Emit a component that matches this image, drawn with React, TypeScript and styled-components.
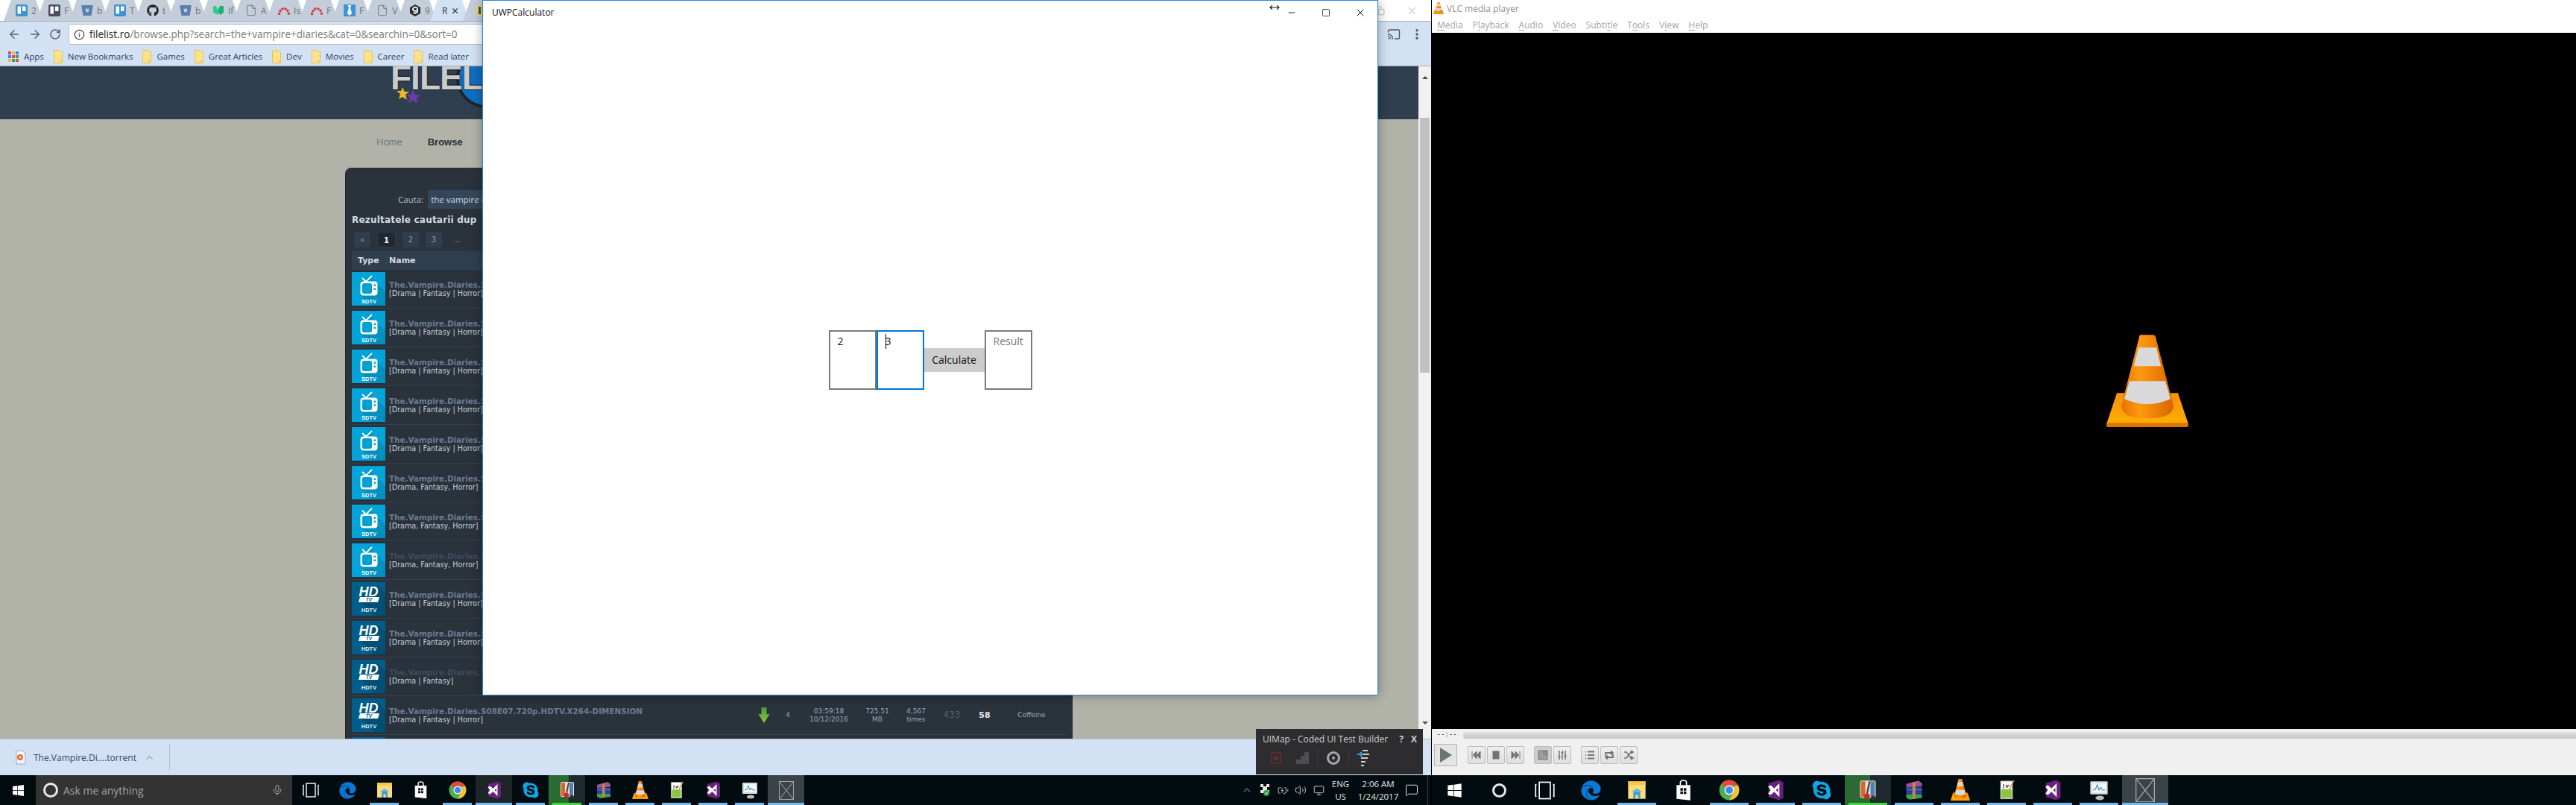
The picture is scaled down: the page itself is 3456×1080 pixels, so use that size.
import React from 'react'
import styled, { createGlobalStyle } from 'styled-components'
import { ArrowLeft, ArrowRight, RotateCw, Info, File, X, ChevronUp, Minus, Square, MoveHorizontal, Cast, EllipsisVertical, Copy, Mic, Volume2, MessageSquare, Monitor, BatteryCharging } from 'lucide-react'
import { FaGithub, FaBitbucket, FaEdge, FaSkype, FaWindows } from 'react-icons/fa'

const UI_FONT = `"Open Sans", "Noto Sans", "Liberation Sans", sans-serif`
const WEB_FONT = `"DejaVu Sans", "Liberation Sans", sans-serif`

const GlobalStyle = createGlobalStyle`
  html, body { margin: 0; padding: 0; width: 3456px; height: 1080px; overflow: hidden; background: #000; }
  * { box-sizing: border-box; }
`

const Desktop = styled.div`
  position: relative;
  display: flex;
  width: 3456px;
  height: 1080px;
  overflow: hidden;
  font-family: ${UI_FONT};
`

/* ---------- left monitor, browser ---------- */

const LeftScreen = styled.div`
  width: 1920px;
  height: 1080px;
  display: flex;
  flex-direction: column;
  flex: none;
`

const TabStrip = styled.div`
  height: 29px;
  flex: none;
  display: flex;
  align-items: flex-start;
  padding-left: 5px;
  background: #fff;
  border-bottom: 1px solid #a9adb3;
`

const Tab = styled.div<{ $active?: boolean }>`
  width: 53px;
  height: 28px;
  flex: none;
  margin-right: -9px;
  padding-left: 16px;
  display: flex;
  align-items: center;
  gap: 5px;
  overflow: hidden;
  font-size: 12px;
  color: ${({ $active }) => ($active ? '#333' : '#6f7377')};
  background: ${({ $active }) => ($active ? '#d3e1f5' : '#c4cdda')};
  clip-path: polygon(0 100%, 10px 0, calc(100% - 10px) 0, 100% 100%);
  svg { flex: none; }
`

const WindowButtons = styled.div`
  margin-left: auto;
  height: 28px;
  display: flex;
  align-items: center;
  gap: 28px;
  padding-right: 17px;
  color: #8a8a8a;
`

const Toolbar = styled.div`
  height: 34px;
  flex: none;
  display: flex;
  align-items: center;
  background: #d3e1f5;
  padding: 0 10px;
  color: #5f6368;
`

const NavIcons = styled.div`
  display: flex;
  align-items: center;
  gap: 10px;
  width: 82px;
`

const Omnibox = styled.div`
  width: 1750px;
  height: 28px;
  display: flex;
  align-items: center;
  gap: 6px;
  padding-left: 6px;
  flex: none;
  background: #fff;
  border: 1px solid #b7bcc4;
  border-radius: 2px;
  font-size: 13.55px;
  color: #7a7a7a;
  white-space: nowrap;
  b { font-weight: 400; color: #222; }
`

const ToolbarEnd = styled.div`
  margin-left: auto;
  display: flex;
  align-items: center;
  gap: 13px;
  color: #555;
`

const Bookmarks = styled.div`
  height: 26px;
  flex: none;
  display: flex;
  align-items: center;
  gap: 13px;
  padding-left: 11px;
  background: #d3e1f5;
  border-bottom: 1px solid #a9adb3;
  font-size: 11.5px;
  color: #2f4061;
`

const Bookmark = styled.span`
  display: flex;
  align-items: center;
  gap: 7px;
  white-space: nowrap;
`

const Viewport = styled.div`
  flex: 1;
  min-height: 0;
  display: flex;
  overflow: hidden;
`

const WebPage = styled.div`
  flex: 1;
  min-width: 0;
  background: #b1b2a8;
  font-family: ${WEB_FONT};
`

const SiteHeader = styled.div`
  position: relative;
  height: 71px;
  overflow: hidden;
  background: #2f3f50;
`

const LogoDisc = styled.div`
  position: absolute;
  left: 612px;
  top: -24px;
  width: 80px;
  height: 80px;
  border-radius: 50%;
  background: #0f6fbe;
  border: 4px solid #1a2530;
`

const LogoText = styled.div`
  position: absolute;
  left: 524px;
  top: -12px;
  font: 700 46px "Liberation Sans", sans-serif;
  letter-spacing: -1px;
  color: #c9ccce;
  text-shadow: 0 1px 0 #111, 1px 0 0 #222, 0 -1px 0 #111;
`

const LogoStars = styled.svg`
  position: absolute;
  left: 532px;
  top: 24px;
`

const SiteNav = styled.div`
  height: 65px;
  padding: 9px 0 0 505px;
  display: flex;
  gap: 34px;
  font: 13px "Liberation Sans", sans-serif;
  line-height: 43px;
`

const NavLink = styled.span<{ $current?: boolean }>`
  color: ${({ $current }) => ($current ? '#27303c' : '#697889')};
  font-weight: ${({ $current }) => ($current ? 700 : 400)};
`

const Panel = styled.div`
  width: 976px;
  margin-left: 463px;
  padding: 29px 8px 0;
  min-height: 800px;
  background: #2a323c;
  border: 1px solid #1f2630;
  border-radius: 8px;
`

const SearchRow = styled.div`
  height: 25px;
  padding-left: 62px;
  display: flex;
  align-items: center;
  gap: 6px;
  font-family: ${UI_FONT};
  font-size: 11.5px;
  color: #b9c2cc;
`

const SearchInput = styled.div`
  width: 640px;
  height: 25px;
  padding-left: 4px;
  line-height: 25px;
  background: #34465a;
  border-radius: 2px;
  color: #d5dce3;
`

const ResultsTitle = styled.div`
  height: 31px;
  line-height: 31px;
  font-weight: 700;
  font-size: 12px;
  letter-spacing: 0.2px;
  color: #d5dae0;
  white-space: nowrap;
`

const Pager = styled.div`
  height: 21px;
  display: flex;
  align-items: center;
  gap: 9px;
  padding-left: 3px;
  font-size: 10px;
`

const PageButton = styled.span<{ $current?: boolean }>`
  width: ${({ $current }) => ($current ? 25 : 22)}px;
  height: 21px;
  line-height: 21px;
  text-align: center;
  border-radius: 3px;
  background: ${({ $current }) => ($current ? '#1f2935' : '#303d4d')};
  border: ${({ $current }) => ($current ? '1px solid #2f3d4e' : 'none')};
  color: ${({ $current }) => ($current ? '#eef1f4' : '#8f9cad')};
  font-weight: ${({ $current }) => ($current ? 700 : 400)};
`

const PageGap = styled.span`
  width: 22px;
  text-align: center;
  color: #8f9cad;
`

const TableHead = styled.div`
  height: 25px;
  margin-top: 5px;
  display: grid;
  grid-template-columns: 42px 1fr;
  padding-left: 8px;
  align-items: center;
  background: #2f3f50;
  font-size: 11px;
  font-weight: 700;
  color: #d5dae0;
`

const Row = styled.div`
  height: 52px;
  padding: 3px 9px 3px 0;
  display: grid;
  grid-template-columns: 50px 1fr 40px 24px 86px 44px 60px 36px 52px 74px;
  align-items: center;
  border-bottom: 1px solid #35404e;
  font-size: 9px;
  line-height: 11px;
  color: #9aa7b6;
`

const NameCell = styled.div`
  min-width: 0;
  white-space: nowrap;
`

const TorrentName = styled.div<{ $dim?: boolean }>`
  font-size: 10.4px;
  font-weight: 700;
  line-height: 12px;
  color: ${({ $dim }) => ($dim ? '#3f4b5c' : '#6c7b91')};
`

const Genres = styled.div`
  font-size: 9.6px;
  line-height: 12px;
  color: #c6ced7;
`

const NumberCell = styled.div<{ $tone?: 'muted' | 'strong' }>`
  text-align: center;
  font-size: ${({ $tone }) => ($tone === 'muted' ? 12 : $tone === 'strong' ? 11 : 9)}px;
  font-weight: ${({ $tone }) => ($tone === 'strong' ? 700 : 400)};
  color: ${({ $tone }) => ($tone === 'muted' ? '#56616e' : $tone === 'strong' ? '#e6e9ec' : '#9aa7b6')};
`

const ArrowCell = styled.div`
  display: flex;
  justify-content: center;
`

const NextTile = styled.div`
  width: 45px;
  height: 45px;
  margin-top: 3px;
  background: #005e8b;
`

const PageScrollbar = styled.div`
  width: 17px;
  flex: none;
  display: flex;
  flex-direction: column;
  align-items: center;
  background: #f1f1f1;
`

const ScrollArrow = styled.div<{ $down?: boolean }>`
  height: 17px;
  flex: none;
  width: 0;
  border-left: 4px solid transparent;
  border-right: 4px solid transparent;
  ${({ $down }) => ($down ? 'border-top: 4px solid #505050; margin-top: auto;' : 'border-bottom: 4px solid #505050;')}
  margin-bottom: 6px;
`

const ScrollThumb = styled.div`
  width: 13px;
  height: 342px;
  margin-top: 46px;
  background: #c1c1c1;
`

const DownloadBar = styled.div`
  height: 49px;
  flex: none;
  display: flex;
  align-items: center;
  padding-left: 21px;
  gap: 10px;
  background: #d3e1f5;
  border-top: 1px solid #b9bfc7;
  font-size: 12px;
  color: #35466a;
`

const DownloadDivider = styled.div`
  width: 1px;
  height: 36px;
  margin-left: 9px;
  background: #b0bccb;
`

/* ---------- taskbars ---------- */

const Taskbar = styled.div`
  height: 40px;
  flex: none;
  display: flex;
  background: #020b0f;
  color: #fff;
`

const TaskCell = styled.div<{ $w: number; $on?: boolean; $fill?: string; $line?: string; $wide?: boolean }>`
  position: relative;
  width: ${({ $w }) => $w}px;
  flex: none;
  display: flex;
  align-items: center;
  justify-content: center;
  background: ${({ $fill }) => $fill || 'transparent'};
  &::after {
    content: '';
    display: ${({ $on }) => ($on ? 'block' : 'none')};
    position: absolute;
    bottom: 0;
    height: 3px;
    left: ${({ $wide }) => ($wide ? 0 : 5)}px;
    right: ${({ $wide }) => ($wide ? 0 : 5)}px;
    background: ${({ $line }) => $line || '#76b9ed'};
  }
`

const SearchBox = styled.div`
  width: 344px;
  flex: none;
  display: flex;
  align-items: center;
  padding: 0 12px 0 10px;
  gap: 7px;
  background: #333;
  font-size: 14px;
  color: #a3a3a3;
  svg:last-child { margin-left: auto; }
`

const CortanaRing = styled.div<{ $size: number }>`
  width: ${({ $size }) => $size}px;
  height: ${({ $size }) => $size}px;
  border: 3px solid #e8e8e8;
  border-radius: 50%;
`

const Tray = styled.div`
  margin-left: auto;
  display: flex;
  align-items: stretch;
`

const TrayIcon = styled.div`
  width: 24px;
  display: flex;
  align-items: center;
  justify-content: center;
  color: #e6e6e6;
`

const TrayText = styled.div<{ $w: number }>`
  width: ${({ $w }) => $w}px;
  display: flex;
  flex-direction: column;
  align-items: center;
  justify-content: center;
  gap: 2px;
  font-size: 11.5px;
  line-height: 15px;
  color: #e6e6e6;
`

const ShowDesktop = styled.div`
  width: 14px;
  background: linear-gradient(to right, transparent 9px, #3a4347 9px, #3a4347 10px, transparent 10px);
`

/* ---------- right monitor, VLC ---------- */

const RightScreen = styled.div`
  flex: 1;
  min-width: 0;
  display: flex;
  flex-direction: column;
  overflow: hidden;
  background: #000;
  border-left: 1px solid #000;
`

const VlcWindow = styled.div`
  flex: 1;
  min-height: 0;
  width: 1919px;
  display: flex;
  flex-direction: column;
  background: #f0f0f0;
`

const VlcTitle = styled.div`
  height: 22px;
  flex: none;
  display: flex;
  align-items: center;
  gap: 4px;
  padding-left: 2px;
  background: #fff;
  font-size: 12px;
  color: #8f8f8f;
`

const VlcMenu = styled.div`
  height: 22px;
  flex: none;
  display: flex;
  align-items: center;
  gap: 13px;
  padding-left: 7px;
  background: #fff;
  font-size: 12px;
  color: #a3a3a3;
  u { text-underline-offset: 2px; }
`

const VideoArea = styled.div`
  flex: 1;
  min-height: 0;
  display: flex;
  align-items: center;
  justify-content: center;
  background: #000;
`

const SeekRow = styled.div`
  height: 13px;
  flex: none;
  display: flex;
  align-items: flex-end;
  padding-left: 5px;
  gap: 7px;
  font: 9px "Liberation Mono", monospace;
  color: #222;
`

const SeekTime = styled.span`
  width: 30px;
  text-align: center;
  line-height: 9px;
`

const SeekBar = styled.div`
  flex: 1;
  height: 9px;
  border-radius: 3px;
  background: linear-gradient(#e2e2e2, #c6c6c6);
`

const Controls = styled.div`
  height: 49px;
  flex: none;
  display: flex;
  align-items: flex-start;
  padding: 7px 0 0 3px;
`

const PlayButton = styled.div`
  width: 31px;
  height: 30px;
  display: flex;
  align-items: center;
  justify-content: center;
  margin-right: 14px;
  background: #e4e4e4;
  border: 1px solid #b5b5b5;
`

const ControlGroup = styled.div`
  display: flex;
  gap: 2px;
  margin-right: 13px;
  margin-top: 3px;
`

const ControlButton = styled.div<{ $pressed?: boolean }>`
  width: 24px;
  height: 24px;
  display: flex;
  align-items: center;
  justify-content: center;
  background: ${({ $pressed }) => ($pressed ? '#cfcfcf' : 'linear-gradient(#efefef, #dedede)')};
  border: 1px solid #bcbcbc;
  border-radius: 2px;
`

/* ---------- floating windows ---------- */

const UwpWindow = styled.div`
  position: absolute;
  left: 647px;
  top: 0;
  width: 1202px;
  height: 933px;
  display: flex;
  flex-direction: column;
  background: #fff;
  border: 1px solid #2b88d8;
  box-shadow: 0 0 14px rgba(0, 0, 0, 0.35);
`

const UwpTitleBar = styled.div`
  height: 32px;
  flex: none;
  display: flex;
  align-items: flex-start;
  padding: 8px 0 0 12px;
  font-size: 12px;
  line-height: 15px;
  color: #111;
`

const UwpControls = styled.div`
  margin-left: auto;
  display: flex;
  align-items: center;
  color: #111;
`

const ResizeCursor = styled.div`
  width: 18px;
  margin: -14px -9px 0 0;
  display: flex;
  justify-content: center;
`

const UwpButton = styled.div`
  width: 46px;
  display: flex;
  justify-content: center;
`

const UwpBody = styled.div`
  flex: 1;
  display: flex;
  align-items: center;
  justify-content: center;
`

const CalcBox = styled.div<{ $focused?: boolean; $placeholder?: boolean }>`
  width: 64px;
  height: 80px;
  padding: 3px 10px;
  border: 2px solid ${({ $focused }) => ($focused ? '#0078d7' : '#7a7a7a')};
  font-size: 14px;
  line-height: 20px;
  color: ${({ $placeholder }) => ($placeholder ? '#7a7a7a' : '#111')};
`

const Caret = styled.span`
  display: inline-block;
  width: 1px;
  height: 20px;
  margin-right: -1px;
  vertical-align: top;
  background: #000;
`

const CalcButton = styled.div`
  width: 81px;
  height: 32px;
  line-height: 32px;
  text-align: center;
  background: #ccc;
  font-size: 14px;
  color: #111;
`

const BuilderWindow = styled.div`
  position: absolute;
  left: 1685px;
  top: 978px;
  width: 224px;
  height: 61px;
  padding: 4px 8px 0 9px;
  background: #2d2d30;
  font-size: 12px;
  color: #d0d0d0;
`

const BuilderHead = styled.div`
  height: 18px;
  display: flex;
  align-items: center;
  white-space: nowrap;
  b { font-weight: 700; margin-left: 10px; }
  span:first-child { margin-right: auto; }
`

const BuilderTools = styled.div`
  height: 28px;
  margin-top: 3px;
  display: flex;
  align-items: center;
  padding-left: 11px;
`

const BuilderDivider = styled.div<{ $gap: number }>`
  width: 1px;
  height: 24px;
  margin: 0 ${({ $gap }) => $gap}px;
  background: #3f3f42;
`

const StepsIcon = styled.svg`
  margin-left: 19px;
`

/* ---------- drawings ---------- */

const Trello = ({ dark }: { dark?: boolean }) => (
  <svg width="16" height="16" viewBox="0 0 16 16">
    <rect width="16" height="16" rx="2" fill={dark ? '#4d4d5c' : '#3c94d4'} />
    <rect x="2.5" y="2.5" width="4.5" height="10" rx="0.6" fill="#fff" />
    <rect x="9" y="2.5" width="4.5" height="6.5" rx="0.6" fill="#fff" />
  </svg>
)

const RedisArc = () => (
  <svg width="16" height="16" viewBox="0 0 16 16" fill="none">
    <path d="M1.5 14 A6.5 8.5 0 0 1 14.5 14" stroke="#d6363f" strokeWidth="3" strokeDasharray="3 1" />
  </svg>
)

const MediumMark = () => (
  <svg width="16" height="16" viewBox="0 0 16 16">
    <path d="M1 2 L5 2 L8 9 V14 L1 11Z" fill="#2bcf8e" />
    <path d="M15 2 L10 2 L7 8 L10 14 L15 11Z" fill="#1faf78" />
  </svg>
)

const TieMark = () => (
  <svg width="16" height="16" viewBox="0 0 16 16">
    <rect width="16" height="16" fill="#3e95d2" />
    <path d="M5.5 1 H10.5 L9 4 L11 12 L8 15 L5 12 L7 4Z" fill="#fff" />
  </svg>
)

const NineMark = () => (
  <svg width="16" height="16" viewBox="0 0 16 16">
    <path d="M8 0 L15 4 V12 L8 16 L1 12 V4Z" fill="#2b2b2b" />
    <path d="M5 5 L8 3.5 L11 5 V10 L8 12 L5.5 10.5 M5 5 V7.5 L8 9 L11 7.5" fill="none" stroke="#fff" strokeWidth="1.8" />
  </svg>
)

const HalfLogo = () => (
  <svg width="16" height="16" viewBox="0 0 16 16">
    <circle cx="8" cy="8" r="7" fill="#f5e02a" />
    <rect x="5" y="3" width="3" height="10" fill="#2147c8" />
  </svg>
)

const Folder = () => (
  <svg width="12" height="18" viewBox="0 0 12 18">
    <path d="M0.5 0.5 H7 L8 2 H11.5 V17.5 H0.5Z" fill="#fde28c" stroke="#e3c25a" />
    <rect x="8" y="14" width="3.5" height="3.5" fill="#f4cf5c" />
  </svg>
)

const AppsGrid = () => (
  <svg width="14" height="14" viewBox="0 0 14 14">
    {['#e8453c', '#f7bb2a', '#3c83f0', '#3c83f0', '#e8453c', '#34a853', '#f7bb2a', '#34a853', '#e8453c'].map((c, i) => (
      <rect key={i} x={(i % 3) * 5} y={Math.floor(i / 3) * 5} width="4" height="4" fill={c} />
    ))}
  </svg>
)

const TorrentFile = () => (
  <svg width="14" height="20" viewBox="0 0 14 20">
    <path d="M1 1 H9 L13 5 V19 H1Z" fill="#f2f5fb" stroke="#8ea6d8" />
    <circle cx="6" cy="10" r="4" fill="#e8702a" />
    <circle cx="6" cy="10" r="1.6" fill="#fbe3c8" />
  </svg>
)

const SdTile = ({ label }: { label: string }) => (
  <svg width="45" height="45" viewBox="0 0 45 45">
    <rect width="45" height="45" fill="#01a4d8" />
    <path d="M24 6 L45 27 V45 H26 L11 30Z" fill="#0190bf" />
    <path d="M14 8 L19 13 L27 5" fill="none" stroke="#fff" strokeWidth="1.8" />
    <rect x="11.5" y="12.5" width="23" height="19" rx="4" fill="#fff" />
    <rect x="14" y="15" width="13" height="14" rx="2.5" fill="#01a0d3" />
    <rect x="29.5" y="16.5" width="2.5" height="2.5" fill="#01a0d3" />
    <rect x="29.5" y="21.5" width="2.5" height="2.5" fill="#01a0d3" />
    <text x="23" y="42" textAnchor="middle" fontFamily="Liberation Sans, sans-serif" fontSize="7.5" fontWeight="700" fill="#fff">{label}</text>
  </svg>
)

const HdTile = ({ label }: { label: string }) => (
  <svg width="45" height="45" viewBox="0 0 45 45">
    <rect width="45" height="45" fill="#005e8b" />
    <path d="M36 6 L45 16 V45 H30 L12 26Z" fill="#004f77" />
    <text x="22.5" y="19" textAnchor="middle" fontFamily="Liberation Sans, sans-serif" fontSize="18" fontWeight="700" fontStyle="italic" fill="#fff">HD</text>
    <path d="M11 20 H37 L35 27 H9Z" fill="#fff" />
    <text x="23" y="26" textAnchor="middle" fontFamily="Liberation Sans, sans-serif" fontSize="6.5" fontWeight="700" fontStyle="italic" fill="#005e8b">TV</text>
    <text x="23" y="40" textAnchor="middle" fontFamily="Liberation Sans, sans-serif" fontSize="7.5" fontWeight="700" fill="#e8f1f6">{label}</text>
  </svg>
)

const GreenArrow = () => (
  <svg width="16" height="23" viewBox="0 0 16 23">
    <defs>
      <linearGradient id="dlArrow" x1="0" y1="0" x2="0" y2="1">
        <stop offset="0" stopColor="#4f9a2f" />
        <stop offset="1" stopColor="#8cc63f" />
      </linearGradient>
    </defs>
    <path d="M4.5 1 H11.5 V10 H15.5 L8 22 L0.5 10 H4.5Z" fill="url(#dlArrow)" />
  </svg>
)

const Cone = ({ size }: { size: number }) => (
  <svg width={size} height={size * 1.13} viewBox="0 0 110 124">
    <defs>
      <linearGradient id="coneOrange" x1="0" y1="0" x2="1" y2="0">
        <stop offset="0" stopColor="#e67200" />
        <stop offset="0.35" stopColor="#ff9a10" />
        <stop offset="1" stopColor="#d96400" />
      </linearGradient>
      <linearGradient id="coneBase" x1="0" y1="0" x2="0" y2="1">
        <stop offset="0" stopColor="#f78f10" />
        <stop offset="1" stopColor="#ffb200" />
      </linearGradient>
    </defs>
    <path d="M14 78 H96 L110 120 Q110 124 106 124 H4 Q0 124 0 120Z" fill="url(#coneBase)" />
    <path d="M0 120 Q0 124 4 124 H106 Q110 124 110 120 L109 118 H1Z" fill="#e07400" />
    <path d="M46 0 H63 Q65 0 66 3 L90 95 Q90 112 55 112 Q20 112 20 95 L44 3 Q44 0 46 0Z" fill="url(#coneOrange)" />
    <path d="M43 17 H67 L73 42 H37Z" fill="#d9d9d9" />
    <path d="M31 62 H79 L86 86 Q70 93 55 93 Q40 93 24 86Z" fill="#d9d9d9" />
  </svg>
)

const VisualStudio = ({ size }: { size: number }) => (
  <svg width={size} height={size} viewBox="0 0 24 24">
    <path d="M4 4 L16 0.5 L21 3 V21 L16 23.5 L4 20Z" fill="#68217a" />
    <path d="M3.5 8 L6.5 6.5 L10.5 10 L16.5 4 V20 L10.5 14 L6.5 17.5 L3.5 16 L6.5 12Z" fill="#fff" />
    <path d="M12.5 12 L15 9.5 V14.5Z" fill="#68217a" />
  </svg>
)

const Chrome = ({ size }: { size: number }) => (
  <svg width={size} height={size} viewBox="0 0 24 24">
    <circle cx="12" cy="12" r="11.5" fill="#4caf50" />
    <path d="M12 .5 A11.5 11.5 0 0 1 22 6.5 H12 A5.5 5.5 0 0 0 7 9.5 L3.5 4 A11.5 11.5 0 0 1 12 .5Z" fill="#e8453c" />
    <path d="M22 6.5 A11.5 11.5 0 0 1 12 23.5 L17 14.5 A5.5 5.5 0 0 0 16 8.5 Z" fill="#fbc02d" />
    <circle cx="12" cy="12" r="5.5" fill="#fff" />
    <circle cx="12" cy="12" r="4.3" fill="#4285f4" />
  </svg>
)

const Explorer = ({ size }: { size: number }) => (
  <svg width={size} height={size} viewBox="0 0 24 24">
    <path d="M2 2 H22 V22 H2Z" fill="#fedc76" />
    <path d="M2 2 H22 V6 H2Z" fill="#f6c945" />
    <path d="M8 14 H16 V22 H13.5 V17.5 H10.5 V22 H8Z" fill="#3f9ad6" />
    <path d="M6 14 H18 L12 10Z" fill="#5cb5ea" />
  </svg>
)

const Store = ({ size }: { size: number }) => (
  <svg width={size} height={size * 1.15} viewBox="0 0 24 28">
    <path d="M8 7 V4 Q8 1 12 1 Q16 1 16 4 V7" fill="none" stroke="#fff" strokeWidth="1.6" />
    <path d="M3 7 H21 V27 L3 25Z" fill="#fff" />
    <rect x="8" y="11" width="3.4" height="3.4" fill="#0a0f12" />
    <rect x="12.4" y="11" width="3.4" height="3.4" fill="#0a0f12" />
    <rect x="8" y="15.4" width="3.4" height="3.4" fill="#0a0f12" />
    <rect x="12.4" y="15.4" width="3.4" height="3.4" fill="#0a0f12" />
  </svg>
)

const Thermometer = ({ size }: { size: number }) => (
  <svg width={size} height={size} viewBox="0 0 24 24">
    <rect x="3" y="1" width="18" height="20" rx="2" fill="#e8e0d2" />
    <rect x="4" y="2" width="5" height="18" fill="#d9642e" />
    <rect x="15" y="2" width="5" height="18" fill="#4f7fb5" />
    <path d="M14 2 L11 16" stroke="#444" strokeWidth="2" />
    <circle cx="11" cy="19" r="3.2" fill="#cc2a1d" />
    <circle cx="18" cy="21" r="2.5" fill="#333" />
  </svg>
)

const WinRar = ({ size }: { size: number }) => (
  <svg width={size} height={size} viewBox="0 0 24 24">
    <path d="M3 5 L17 1 L21 4 V8 L3 9Z" fill="#a24f9a" />
    <path d="M3 9 H21 V13 H3Z" fill="#3a55c0" />
    <path d="M3 13 H21 V17 H3Z" fill="#2f3f9c" />
    <path d="M3 17 H21 V21 L7 23 L3 21Z" fill="#37a347" />
    <rect x="10" y="3" width="3.5" height="19" fill="#b58a4e" />
  </svg>
)

const Notepad = ({ size }: { size: number }) => (
  <svg width={size} height={size * 1.15} viewBox="0 0 24 28">
    <path d="M4 2 H20 V26 H4Z" fill="#fff" stroke="#bbb" />
    <path d="M5 13 H19 V25 H5Z" fill="#8bc53f" />
    <path d="M8 6 V12 M11 8 H16 M11 10 H14" stroke="#333" strokeWidth="1.2" />
    <path d="M22 1 L15 15" stroke="#d8a03c" strokeWidth="1.6" />
  </svg>
)

const PerfMon = ({ size }: { size: number }) => (
  <svg width={size} height={size} viewBox="0 0 24 24">
    <rect x="2" y="2" width="20" height="15" rx="1" fill="#d8d8d8" />
    <rect x="4" y="4" width="16" height="11" fill="#f4f8fb" />
    <path d="M5 12 L8 11 L10 6 L12 12 L14 9 L16 12 H19" fill="none" stroke="#2c8fd8" strokeWidth="1" />
    <ellipse cx="13" cy="21" rx="5" ry="2.5" fill="#bdbdbd" />
  </svg>
)

const CrossBox = ({ size }: { size: number }) => (
  <svg width={size} height={size * 1.25} viewBox="0 0 20 25" fill="none" stroke="#a2a7a8">
    <rect x="0.5" y="0.5" width="19" height="24" />
    <path d="M0.5 0.5 L19.5 24.5 M19.5 0.5 L0.5 24.5" />
  </svg>
)

const TaskView = ({ size }: { size: number }) => (
  <svg width={size} height={size} viewBox="0 0 22 22" fill="none" stroke="#fff" strokeWidth="1.4">
    <rect x="5" y="2" width="12" height="18" />
    <path d="M2 4.5 H1 V17.5 H2 M20 4.5 H21 V17.5 H20" />
  </svg>
)

const HealthShield = () => (
  <svg width="14" height="18" viewBox="0 0 14 18">
    <path d="M1 1 H5 V4 H9 V1 H13 V5 H10 V9 H13 V13 H1 V9 H4 V5 H1Z" fill="#e8e8e8" />
    <circle cx="9" cy="13" r="4" fill="#2f9e44" />
    <path d="M7 13 L8.5 14.5 L11 11.5" stroke="#fff" fill="none" />
  </svg>
)

const Transport = ({ kind }: { kind: string }) => {
  const c = '#6d766c'
  return (
    <svg width="16" height="16" viewBox="0 0 16 16" fill={c} stroke={c}>
      {kind === 'prev' && <path d="M2 3 V13 M8 3 L3.5 8 L8 13Z M13 3 L8.5 8 L13 13Z" />}
      {kind === 'stop' && <rect x="4" y="3" width="8" height="10" />}
      {kind === 'next' && <path d="M14 3 V13 M8 3 L12.5 8 L8 13Z M3 3 L7.5 8 L3 13Z" />}
      {kind === 'full' && <path d="M2 2 H14 V14 H2Z M9 3 H13 V7 H9Z" fill="#9aa09a" />}
      {kind === 'mix' && <path d="M4 2 V14 M8 2 V14 M12 2 V14 M2.5 10 H5.5 M6.5 5 H9.5 M10.5 9 H13.5" strokeWidth="1.5" fill="none" />}
      {kind === 'list' && <path d="M5 3.5 H14 M5 8 H14 M5 12.5 H14 M2 3.5 H3 M2 8 H3 M2 12.5 H3" strokeWidth="1.8" fill="none" />}
      {kind === 'loop' && <path d="M3 9 V5 H12 M10 2.5 L13 5 L10 7.5 M13 7 V11 H4 M6 8.5 L3 11 L6 13.5" strokeWidth="1.8" fill="none" />}
      {kind === 'shuffle' && <path d="M2 4 H5 L11 12 H13 M2 12 H5 L11 4 H13 M11 2 L14 4 L11 6 M11 10 L14 12 L11 14" strokeWidth="1.6" fill="none" />}
    </svg>
  )
}

const tabs: { icon: React.ReactNode; text: string }[] = [
  { icon: <Trello />, text: '2' },
  { icon: <Trello dark />, text: 'F' },
  { icon: <FaBitbucket size={16} color="#5a80ad" />, text: 'b' },
  { icon: <Trello />, text: 'T' },
  { icon: <FaGithub size={16} color="#222" />, text: 't' },
  { icon: <FaBitbucket size={16} color="#5a80ad" />, text: 'b' },
  { icon: <MediumMark />, text: 'If' },
  { icon: <File size={16} strokeWidth={1.2} color="#666" />, text: 'A' },
  { icon: <RedisArc />, text: 'Is' },
  { icon: <RedisArc />, text: 'F' },
  { icon: <TieMark />, text: 'F' },
  { icon: <File size={16} strokeWidth={1.2} color="#666" />, text: 'V' },
  { icon: <NineMark />, text: '9' },
]

const bookmarks = ['New Bookmarks', 'Games', 'Great Articles', 'Dev', 'Movies', 'Career', 'Read later']

const PIPE = '[Drama | Fantasy | Horror]'
const COMMA = '[Drama, Fantasy, Horror]'
const SHOW = 'The.Vampire.Diaries.S'

type Torrent = { hd?: boolean; name: string; genres: string; dim?: boolean; details?: boolean }

// only the last row is uncovered by the calculator window, so only it gets its numbers
const torrents: Torrent[] = [
  { name: SHOW, genres: PIPE },
  { name: SHOW, genres: PIPE },
  { name: SHOW, genres: PIPE },
  { name: SHOW, genres: PIPE },
  { name: SHOW, genres: PIPE },
  { name: SHOW, genres: COMMA },
  { name: SHOW, genres: COMMA },
  { name: SHOW, genres: COMMA, dim: true },
  { hd: true, name: SHOW, genres: PIPE },
  { hd: true, name: SHOW, genres: PIPE },
  { hd: true, name: SHOW, genres: '[Drama | Fantasy]', dim: true },
  { hd: true, name: 'The.Vampire.Diaries.S08E07.720p.HDTV.X264-DIMENSION', genres: PIPE, details: true },
]

const vlcMenu: [string, string, string][] = [
  ['', 'M', 'edia'],
  ['P', 'l', 'ayback'],
  ['', 'A', 'udio'],
  ['', 'V', 'ideo'],
  ['Subti', 't', 'le'],
  ['T', 'o', 'ols'],
  ['V', 'i', 'ew'],
  ['', 'H', 'elp'],
]

const leftApps: { node: React.ReactNode; on?: boolean; fill?: string; line?: string; wide?: boolean }[] = [
  { node: <FaEdge size={23} color="#0a78d6" /> },
  { node: <Explorer size={24} />, on: true },
  { node: <Store size={21} /> },
  { node: <Chrome size={24} />, on: true },
  { node: <VisualStudio size={24} />, on: true, fill: '#1e2528', wide: true },
  { node: <FaSkype size={24} color="#0aa8e6" />, on: true },
  { node: <Thermometer size={24} />, on: true, fill: 'linear-gradient(to right, #2b6a34 55%, #1e2a2d 55%)', line: '#3ddc3a' },
  { node: <WinRar size={24} />, on: true },
  { node: <Cone size={22} />, on: true },
  { node: <Notepad size={21} />, on: true },
  { node: <VisualStudio size={24} />, on: true },
  { node: <PerfMon size={24} />, on: true },
  { node: <CrossBox size={20} />, on: true, fill: '#3a4447', wide: true },
]

const rightApps: typeof leftApps = [
  { node: <FaEdge size={27} color="#0a78d6" /> },
  { node: <Explorer size={28} />, on: true },
  { node: <Store size={25} /> },
  { node: <Chrome size={28} />, on: true },
  { node: <VisualStudio size={28} />, on: true },
  { node: <FaSkype size={28} color="#0aa8e6" />, on: true },
  { node: <Thermometer size={28} />, on: true, fill: 'linear-gradient(to right, #2b6a34 55%, #1e2a2d 55%)', line: '#3ddc3a' },
  { node: <WinRar size={28} />, on: true },
  { node: <Cone size={26} />, on: true },
  { node: <Notepad size={24} />, on: true },
  { node: <VisualStudio size={28} />, on: true },
  { node: <PerfMon size={28} />, on: true },
  { node: <CrossBox size={26} />, on: true, fill: '#3a4447', wide: true },
]

export default function App() {
  return (
    <>
      <GlobalStyle />
      <Desktop>
        <LeftScreen>
          <TabStrip>
            {tabs.map((t, i) => (
              <Tab key={i}>{t.icon}<span>{t.text}</span></Tab>
            ))}
            <Tab $active>
              <span>R</span>
              <X size={11} strokeWidth={3} color="#444" />
            </Tab>
            <Tab><HalfLogo /></Tab>
            <WindowButtons>
              <Copy size={13} strokeWidth={1} />
              <X size={17} strokeWidth={1} />
            </WindowButtons>
          </TabStrip>

          <Toolbar>
            <NavIcons>
              <ArrowLeft size={18} strokeWidth={2} />
              <ArrowRight size={18} strokeWidth={2} />
              <RotateCw size={16} strokeWidth={2.4} />
            </NavIcons>
            <Omnibox>
              <Info size={15} strokeWidth={2} color="#444" />
              <span><b>filelist.ro</b>/browse.php?search=the+vampire+diaries&amp;cat=0&amp;searchin=0&amp;sort=0</span>
            </Omnibox>
            <ToolbarEnd>
              <Cast size={18} strokeWidth={1.8} />
              <EllipsisVertical size={18} strokeWidth={2.4} />
            </ToolbarEnd>
          </Toolbar>

          <Bookmarks>
            <Bookmark><AppsGrid />Apps</Bookmark>
            {bookmarks.map(b => (
              <Bookmark key={b}><Folder />{b}</Bookmark>
            ))}
          </Bookmarks>

          <Viewport>
            <WebPage>
              <SiteHeader>
                <LogoDisc />
                <LogoText>FILEL</LogoText>
                <LogoStars width="40" height="26" viewBox="0 0 40 26">
                  <path d="M8 4 L11 10 L17 10 L12 14 L14 21 L8 17 L3 20 L5 13 L0 9 L6 9Z" fill="#f0b429" />
                  <path d="M22 8 L25 14 L32 15 L27 19 L28 26 L22 22 L16 25 L18 18 L13 14 L19 14Z" fill="#6a3aa8" />
                </LogoStars>
              </SiteHeader>
              <SiteNav>
                <NavLink>Home</NavLink>
                <NavLink $current>Browse</NavLink>
              </SiteNav>
              <Panel>
                <SearchRow>
                  <span>Cauta:</span>
                  <SearchInput>the vampire di</SearchInput>
                </SearchRow>
                <ResultsTitle>Rezultatele cautarii dup</ResultsTitle>
                <Pager>
                  <PageButton>«</PageButton>
                  <PageButton $current>1</PageButton>
                  <PageButton>2</PageButton>
                  <PageButton>3</PageButton>
                  <PageGap>...</PageGap>
                </Pager>
                <TableHead>
                  <span>Type</span>
                  <span>Name</span>
                </TableHead>
                {torrents.map((t, i) => (
                  <Row key={i}>
                    {t.hd ? <HdTile label="HDTV" /> : <SdTile label="SDTV" />}
                    <NameCell>
                      <TorrentName $dim={t.dim}>{t.name}</TorrentName>
                      <Genres>{t.genres}</Genres>
                    </NameCell>
                    {t.details && (
                      <>
                        <ArrowCell><GreenArrow /></ArrowCell>
                        <NumberCell>4</NumberCell>
                        <NumberCell>03:59:18<br />10/12/2016</NumberCell>
                        <NumberCell>725.51<br />MB</NumberCell>
                        <NumberCell>4,567<br />times</NumberCell>
                        <NumberCell $tone="muted">433</NumberCell>
                        <NumberCell $tone="strong">58</NumberCell>
                        <NumberCell>Coffeine</NumberCell>
                      </>
                    )}
                  </Row>
                ))}
                <NextTile />
              </Panel>
            </WebPage>
            <PageScrollbar>
              <ScrollArrow />
              <ScrollThumb />
              <ScrollArrow $down />
            </PageScrollbar>
          </Viewport>

          <DownloadBar>
            <TorrentFile />
            <span>The.Vampire.Di....torrent</span>
            <ChevronUp size={15} strokeWidth={1.5} color="#5d6b80" />
            <DownloadDivider />
          </DownloadBar>

          <Taskbar>
            <TaskCell $w={48}><FaWindows size={17} color="#fff" /></TaskCell>
            <SearchBox>
              <CortanaRing $size={20} />
              <span>Ask me anything</span>
              <Mic size={16} strokeWidth={1.2} color="#bbb" />
            </SearchBox>
            <TaskCell $w={50}><TaskView size={22} /></TaskCell>
            {leftApps.map((a, i) => (
              <TaskCell key={i} $w={49} $on={a.on} $fill={a.fill} $line={a.line} $wide={a.wide}>{a.node}</TaskCell>
            ))}
            <Tray>
              <TrayIcon><ChevronUp size={16} strokeWidth={1.2} /></TrayIcon>
              <TrayIcon><HealthShield /></TrayIcon>
              <TrayIcon><BatteryCharging size={15} strokeWidth={1.3} /></TrayIcon>
              <TrayIcon><Volume2 size={16} strokeWidth={1.3} /></TrayIcon>
              <TrayIcon><Monitor size={15} strokeWidth={1.3} /></TrayIcon>
              <TrayText $w={35}><span>ENG</span><span>US</span></TrayText>
              <TrayText $w={66}><span>2:06 AM</span><span>1/24/2017</span></TrayText>
              <TrayIcon><MessageSquare size={18} strokeWidth={1.3} /></TrayIcon>
              <ShowDesktop />
            </Tray>
          </Taskbar>
        </LeftScreen>

        <RightScreen>
          <VlcWindow>
            <VlcTitle><Cone size={14} />VLC media player</VlcTitle>
            <VlcMenu>
              {vlcMenu.map(([a, k, b]) => (
                <span key={a + k}>{a}<u>{k}</u>{b}</span>
              ))}
            </VlcMenu>
            <VideoArea><Cone size={110} /></VideoArea>
            <SeekRow>
              <SeekTime>--:--</SeekTime>
              <SeekBar />
            </SeekRow>
            <Controls>
              <PlayButton>
                <svg width="18" height="20" viewBox="0 0 18 20"><path d="M1 0 L17 10 L1 20Z" fill="#6d766c" /></svg>
              </PlayButton>
              <ControlGroup>
                <ControlButton><Transport kind="prev" /></ControlButton>
                <ControlButton><Transport kind="stop" /></ControlButton>
                <ControlButton><Transport kind="next" /></ControlButton>
              </ControlGroup>
              <ControlGroup>
                <ControlButton $pressed><Transport kind="full" /></ControlButton>
                <ControlButton><Transport kind="mix" /></ControlButton>
              </ControlGroup>
              <ControlGroup>
                <ControlButton><Transport kind="list" /></ControlButton>
                <ControlButton><Transport kind="loop" /></ControlButton>
                <ControlButton><Transport kind="shuffle" /></ControlButton>
              </ControlGroup>
            </Controls>
          </VlcWindow>
          <Taskbar>
            <TaskCell $w={60}><FaWindows size={21} color="#fff" /></TaskCell>
            <TaskCell $w={60}><CortanaRing $size={19} /></TaskCell>
            <TaskCell $w={62}><TaskView size={27} /></TaskCell>
            {rightApps.map((a, i) => (
              <TaskCell key={i} $w={62} $on={a.on} $fill={a.fill} $line={a.line} $wide={a.wide}>{a.node}</TaskCell>
            ))}
          </Taskbar>
        </RightScreen>

        <UwpWindow>
          <UwpTitleBar>
            <span>UWPCalculator</span>
            <UwpControls>
              <ResizeCursor><MoveHorizontal size={14} strokeWidth={2} /></ResizeCursor>
              <UwpButton><Minus size={14} strokeWidth={1.5} /></UwpButton>
              <UwpButton><Square size={12} strokeWidth={1.5} /></UwpButton>
              <UwpButton><X size={16} strokeWidth={1.5} /></UwpButton>
            </UwpControls>
          </UwpTitleBar>
          <UwpBody>
            <CalcBox>2</CalcBox>
            <CalcBox $focused><Caret />3</CalcBox>
            <CalcButton>Calculate</CalcButton>
            <CalcBox $placeholder>Result</CalcBox>
          </UwpBody>
        </UwpWindow>

        <BuilderWindow>
          <BuilderHead>
            <span>UIMap - Coded UI Test Builder</span>
            <b>?</b>
            <b>X</b>
          </BuilderHead>
          <BuilderTools>
            <svg width="14" height="16" viewBox="0 0 14 16"><rect x="1" y="1" width="12" height="14" fill="none" stroke="#6e2a2a" strokeWidth="1.5" /><circle cx="7" cy="8" r="3" fill="#6e2a2a" /></svg>
            <StepsIcon width="20" height="18" viewBox="0 0 20 18"><path d="M1 17 V11 H7 V6 H12 V1 H18 V17Z" fill="#4e4e50" /></StepsIcon>
            <BuilderDivider $gap={10} />
            <svg width="20" height="22" viewBox="0 0 20 22"><circle cx="10" cy="11" r="7.5" fill="none" stroke="#a8a8a8" strokeWidth="3" /><circle cx="10" cy="11" r="2" fill="#a8a8a8" /></svg>
            <BuilderDivider $gap={10} />
            <svg width="18" height="24" viewBox="0 0 18 24"><path d="M1 7 H7 M5 4 L8 7 L5 10" stroke="#3c9ad8" strokeWidth="2" fill="none" /><path d="M8 2 H15 M9 7 H17 M6 12 H15 M6 17 H12 M6 22 H10" stroke="#cfcfcf" strokeWidth="2" /></svg>
          </BuilderTools>
        </BuilderWindow>
      </Desktop>
    </>
  )
}
